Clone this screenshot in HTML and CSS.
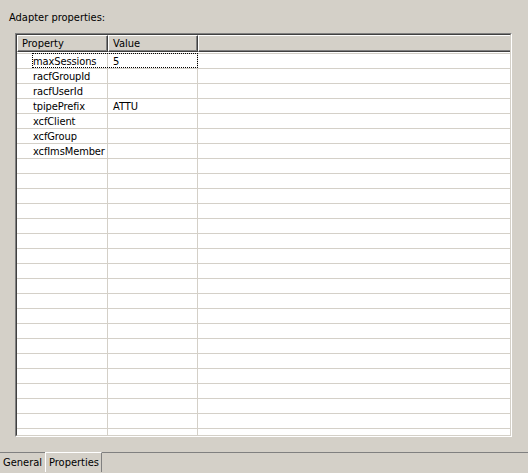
FILE: index.html
```html
<!DOCTYPE html>
<html>
<head>
<meta charset="utf-8">
<link rel="stylesheet" href="styles.css">
</head>
<body>
<div class="page">
  <div class="label">Adapter properties:</div>
  <div class="panel">
    <div class="panel-inner">
      <div class="header">
        <div class="hcell c1">Property</div>
        <div class="hcell c2">Value</div>
        <div class="hcell c3"></div>
      </div>
      <div class="rows">
        <div class="row first"><div class="cell c1 prop">maxSessions</div><div class="cell c2">5</div><div class="cell c3"></div><div class="focus"></div></div>
        <div class="row"><div class="cell c1 prop">racfGroupId</div><div class="cell c2"></div><div class="cell c3"></div></div>
        <div class="row"><div class="cell c1 prop">racfUserId</div><div class="cell c2"></div><div class="cell c3"></div></div>
        <div class="row"><div class="cell c1 prop">tpipePrefix</div><div class="cell c2">ATTU</div><div class="cell c3"></div></div>
        <div class="row"><div class="cell c1 prop">xcfClient</div><div class="cell c2"></div><div class="cell c3"></div></div>
        <div class="row"><div class="cell c1 prop">xcfGroup</div><div class="cell c2"></div><div class="cell c3"></div></div>
        <div class="row"><div class="cell c1 prop">xcfImsMember</div><div class="cell c2"></div><div class="cell c3"></div></div>
        <div class="row"><div class="cell c1"></div><div class="cell c2"></div><div class="cell c3"></div></div>
        <div class="row"><div class="cell c1"></div><div class="cell c2"></div><div class="cell c3"></div></div>
        <div class="row"><div class="cell c1"></div><div class="cell c2"></div><div class="cell c3"></div></div>
        <div class="row"><div class="cell c1"></div><div class="cell c2"></div><div class="cell c3"></div></div>
        <div class="row"><div class="cell c1"></div><div class="cell c2"></div><div class="cell c3"></div></div>
        <div class="row"><div class="cell c1"></div><div class="cell c2"></div><div class="cell c3"></div></div>
        <div class="row"><div class="cell c1"></div><div class="cell c2"></div><div class="cell c3"></div></div>
        <div class="row"><div class="cell c1"></div><div class="cell c2"></div><div class="cell c3"></div></div>
        <div class="row"><div class="cell c1"></div><div class="cell c2"></div><div class="cell c3"></div></div>
        <div class="row"><div class="cell c1"></div><div class="cell c2"></div><div class="cell c3"></div></div>
        <div class="row"><div class="cell c1"></div><div class="cell c2"></div><div class="cell c3"></div></div>
        <div class="row"><div class="cell c1"></div><div class="cell c2"></div><div class="cell c3"></div></div>
        <div class="row"><div class="cell c1"></div><div class="cell c2"></div><div class="cell c3"></div></div>
        <div class="row"><div class="cell c1"></div><div class="cell c2"></div><div class="cell c3"></div></div>
        <div class="row"><div class="cell c1"></div><div class="cell c2"></div><div class="cell c3"></div></div>
        <div class="row"><div class="cell c1"></div><div class="cell c2"></div><div class="cell c3"></div></div>
        <div class="row"><div class="cell c1"></div><div class="cell c2"></div><div class="cell c3"></div></div>
        <div class="row"><div class="cell c1"></div><div class="cell c2"></div><div class="cell c3"></div></div>
        <div class="row"><div class="cell c1"></div><div class="cell c2"></div><div class="cell c3"></div></div>
        <div class="row"><div class="cell c1"></div><div class="cell c2"></div><div class="cell c3"></div></div>
      </div>
    </div>
  </div>
  <div class="tabs">
    <div class="tab">General</div>
    <div class="tab selected">Properties</div>
    <div class="tab-rest"></div>
  </div>
</div>
</body>
</html>
```
FILE: styles.css
```css
html, body {
  margin: 0;
  padding: 0;
  background: #d4d0c8;
}
body {
  font-family: "DejaVu Sans Condensed", "Liberation Sans", Arial, sans-serif;
  font-size: 11px;
  color: #000;
}
.page {
  width: 528px;
  height: 473px;
  display: flex;
  flex-direction: column;
  overflow: hidden;
}
.label {
  padding: 11px 0 0 9px;
  height: 13px;
  line-height: 13px;
  margin-bottom: 9px;
}
.panel {
  margin-left: 15px;
  width: 495px;
  height: 402px;
  border-top: 1px solid #808080;
  border-left: 1px solid #808080;
  border-right: 1px solid #ffffff;
  border-bottom: 1px solid #ffffff;
}
.panel-inner {
  height: 400px;
  border-top: 1px solid #404040;
  border-left: 1px solid #404040;
  border-right: 1px solid #d4d0c8;
  border-bottom: 1px solid #d4d0c8;
  background: #fff;
  overflow: hidden;
  display: flex;
  flex-direction: column;
}
.header {
  display: flex;
  height: 17px;
  flex-shrink: 0;
  background: #d4d0c8;
}
.hcell {
  box-sizing: border-box;
  height: 17px;
  padding-top: 1px;
  line-height: 13px;
  border-top: 1px solid #fff;
  border-left: 1px solid #fff;
  border-right: 1px solid #404040;
  border-bottom: 1px solid #404040;
  box-shadow: inset -1px -1px 0 #808080;
  white-space: nowrap;
}
.hcell.c1 { width: 91px; padding-left: 4px; }
.hcell.c2 { width: 90px; padding-left: 4px; }
.hcell.c3 { flex: 1; border-right: none; box-shadow: inset 0 -1px 0 #808080; }
.rows {
  padding-top: 1px;
  display: flex;
  flex-direction: column;
}
.row {
  position: relative;
  display: flex;
  height: 15px;
  flex-shrink: 0;
  box-sizing: border-box;
  border-top: 1px solid #d4d0c8;
}
.cell {
  box-sizing: border-box;
  height: 14px;
  padding-top: 1px;
  line-height: 13px;
  white-space: nowrap;
}
.cell.c1 { width: 91px; border-right: 1px solid #d4d0c8; }
.cell.c2 { width: 90px; border-right: 1px solid #d4d0c8; padding-left: 5px; }
.cell.c3 { flex: 1; }
.cell.prop { padding-left: 16px; letter-spacing: -0.1px; }
.focus {
  position: absolute;
  left: 15px;
  top: -1px;
  width: 166px;
  height: 15px;
  box-sizing: border-box;
  border: 1px dotted #000;
}
.tabs {
  margin-top: 15px;
  display: flex;
  height: 20px;
}
.tab {
  box-sizing: border-box;
  height: 20px;
  border-top: 1px solid #808080;
  line-height: 16px;
  padding-top: 2px;
  white-space: nowrap;
}
.tab:first-child {
  width: 45px;
  padding-left: 3px;
}
.tab.selected {
  width: 57px;
  padding-left: 3px;
  border-top: 1px solid #ffffff;
  border-left: 1px solid #ffffff;
  border-right: 1px solid #808080;
}
.tab-rest {
  flex: 1;
  border-top: 1px solid #808080;
}
```
